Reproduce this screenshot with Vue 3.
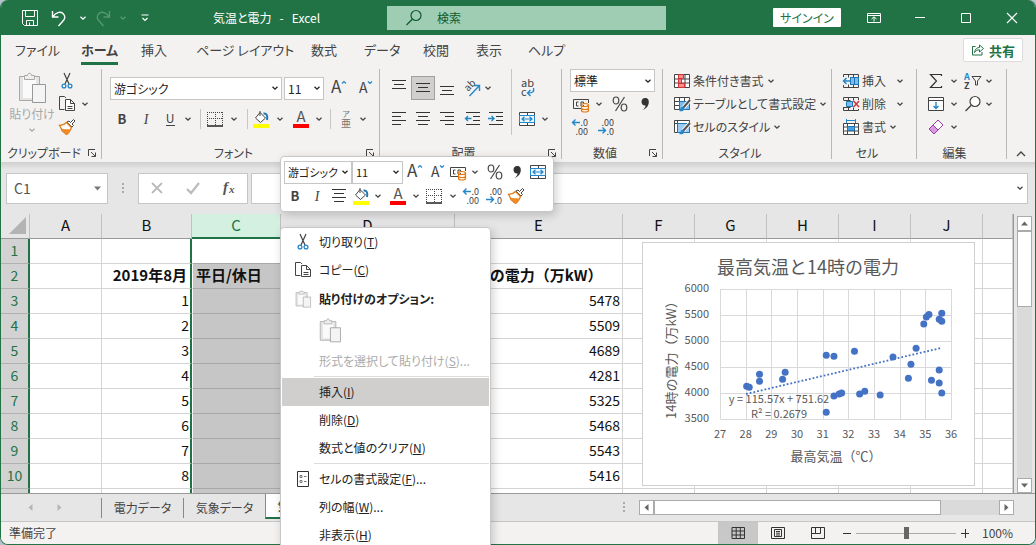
<script setup>
const clipItems = ['cut', 'copy', 'brush']
const fontRow = ['bold', 'italic', 'underline', 'chev', 'sep', 'border', 'chev', 'sep', 'fill', 'chev', 'color', 'chev', 'sep', 'ruby', 'chev']
const alignRow1 = ['top', 'middle', 'bottom', 'orient', 'chev']
const alignRow2 = ['left', 'center', 'right', 'outdent', 'indent']
const numberRow1 = ['currency', 'chev', 'percent', 'comma']
const numberRow2 = ['incdec', 'decdec']
const miniRow1 = ['grow', 'shrink', 'currency', 'chev', 'percent', 'comma', 'merge']
const miniRow2 = ['bold', 'italic', 'center', 'fill', 'chev', 'color', 'chev', 'border', 'chev', 'incdec', 'decdec', 'brush']
const editItems = ['sum', 'chev', 'sort', 'chev', 'down', 'chev', 'find', 'chev', 'eraser', 'chev']
const styleItems = [
  { icon: 'cond', text: '条件付き書式' },
  { icon: 'tablefmt', text: 'テーブルとして書式設定' },
  { icon: 'cellstyle', text: 'セルのスタイル' },
]
const cellItems = [
  { icon: 'cellins', text: '挿入', wide: true },
  { icon: 'celldel', text: '削除', wide: true },
  { icon: 'cellfmt', text: '書式' },
]
const labels = {
  cut: '切り取り', copy: 'コピー', brush: '書式のコピー', bold: '太字', italic: '斜体', underline: '下線', chev: 'その他',
  border: '罫線', fill: '塗りつぶし', color: 'フォントの色', ruby: 'ふりがな', top: '上揃え', middle: '上下中央揃え',
  bottom: '下揃え', orient: '方向', left: '左揃え', center: '中央揃え', right: '右揃え', outdent: 'インデントを減らす',
  indent: 'インデントを増やす', currency: '通貨', percent: 'パーセント', comma: '桁区切り', incdec: '小数点以下を増やす',
  decdec: '小数点以下を減らす', grow: '拡大', shrink: '縮小', merge: 'セルを結合', sum: '合計', sort: '並べ替え',
  down: 'フィル', find: '検索', eraser: 'クリア',
}
const tabs = ['ファイル', 'ホーム', '挿入', 'ページ レイアウト', '数式', 'データ', '校閲', '表示', 'ヘルプ']
const cols = ['A', 'B', 'C', 'D', 'E', 'F', 'G', 'H', 'I', 'J', '']
const power = [5478, 5509, 4689, 4281, 5325, 5468, 5543, 5416]
const rows = [
  { n: 1, b: '', c: '', e: '' },
  { n: 2, b: '2019年8月', c: '平日/休日', e: '14時の電力（万kW）', head: true },
  ...power.map((p, i) => ({ n: i + 3, b: i + 1, c: '', e: p })),
  { n: '', b: '', c: '', e: '' },
]
const menu = [
  { icon: 'cut', text: '切り取り', key: 'T' },
  { icon: 'copy', text: 'コピー', key: 'C' },
  { icon: 'paste', text: '貼り付けのオプション:', kind: 'heading' },
  { kind: 'paste' },
  { text: '形式を選択して貼り付け', key: 'S', tail: '...', kind: 'off' },
  { kind: 'line' },
  { text: '挿入', key: 'I', kind: 'hover' },
  { text: '削除', key: 'D' },
  { text: '数式と値のクリア', key: 'N' },
  { kind: 'line' },
  { icon: 'props', text: 'セルの書式設定', key: 'F', tail: '...' },
  { text: '列の幅', key: 'W', tail: '...' },
  { text: '非表示', key: 'H' },
]
const px = (t) => 79 + (t - 27) * 25.67
const xTicks = [27, 28, 29, 30, 31, 32, 33, 34, 35, 36]
const yTicks = [6000, 5500, 5000, 4500, 4000, 3500]
const py = (v) => 47 + (6000 - v) * 0.052
const points = [
  [28, 4130], [28.1, 4110], [28.5, 4360], [28.5, 4225], [29.5, 4400], [29.4, 4265], [31.1, 4725], [31.4, 4705],
  [32.2, 4805], [33.7, 4690], [34.3, 4285], [34.4, 4555], [34.6, 4860], [34.9, 5325], [35, 5460], [35.1, 5510],
  [35.6, 5535], [35.5, 5420], [35.6, 5380], [35.5, 4440], [35.2, 4245], [35.5, 4190], [35.6, 4000], [31.4, 3940],
  [31.6, 3980], [31.7, 4000], [32.4, 3980], [32.6, 4035], [33.2, 3960], [31.1, 3630],
]
</script>

<template>
  <div class="desktop">
    <svg class="sprite" aria-hidden="true">
      <symbol id="chev" viewBox="0 0 8 8"><path d="M1.5 2.7 4 5.2 6.500 2.700" fill="none" stroke="currentColor" stroke-width="1.3" /></symbol>
      <symbol id="save" viewBox="0 0 18 18"><path d="M1.500 1.500h15v15H3.500l-2-2zM4.500 1.500v6h9v-6M5.500 16.500v-5h7v5M8.500 16.500v-3" fill="none" stroke="#fff" /></symbol>
      <symbol id="undo" viewBox="0 0 18 18"><path d="M2.500 2v6h6M2.800 7.600C6 3.500 10 2 13 4.500c3 2.800 2 5.500-.5 8L8.500 17" fill="none" stroke="currentColor" stroke-width="1.400" /></symbol>
      <symbol id="redo" viewBox="0 0 18 18"><path d="M15.500 2v6h-6M15.200 7.600C12 3.500 8 2 5 4.500c-3 2.800-2 5.500.5 8l4 4.500" fill="none" stroke="currentColor" stroke-width="1.400" /></symbol>
      <symbol id="custom" viewBox="0 0 10 10"><path d="M1.500 2h7M2.500 5 5 7.500 7.500 5" fill="none" stroke="#fff" stroke-width="1.200" /></symbol>
      <symbol id="search" viewBox="0 0 18 18"><circle cx="11" cy="6.500" r="5" fill="none" stroke="currentColor" stroke-width="1.200" /><path d="M7.300 10.200 1.500 16" stroke="currentColor" stroke-width="1.300" /></symbol>
      <symbol id="ribbonopt" viewBox="0 0 18 18"><path d="M2.500 4.500h13v9h-13zM2.500 6.500h13M9 12.500v-4.500M6.500 10 9 7.800 11.500 10" fill="none" stroke="#fff" /></symbol>
      <symbol id="min" viewBox="0 0 18 18"><path d="M4 8.500h10" stroke="#fff" /></symbol>
      <symbol id="max" viewBox="0 0 18 18"><path d="M4.500 4.500h9v9h-9z" fill="none" stroke="#fff" /></symbol>
      <symbol id="close" viewBox="0 0 18 18"><path d="M4 4l10 10M14 4 4 14" stroke="#fff" stroke-width="1.100" /></symbol>
      <symbol id="share" viewBox="0 0 14 14"><path d="M4.500 3.500h-3v8.500h9.500V9M3.500 9.500C4 6 6 4.500 8.500 4.500V2l4 3.500-4 3.500V6.800C6.500 6.800 5 7.500 3.500 9.500z" fill="none" stroke="#217346" /></symbol>
      <symbol id="cut" viewBox="0 0 18 18"><path d="M6 1 11 12M12 1 7 12" stroke="#444" stroke-width="1.200" /><g fill="none" stroke="#2387c8" stroke-width="1.300"><circle cx="6" cy="14" r="1.900" /><circle cx="12" cy="14" r="1.900" /></g></symbol>
      <symbol id="copy" viewBox="0 0 18 18"><path d="M6.500 14.500h-5v-13h5l1.500 1.500" fill="none" stroke="#444" /><path d="M7.500 4.500h5l4 4v7h-9zM12.500 4.500v4h4M9.500 11.500h5M9.500 13.500h5" fill="#fff" stroke="#444" /></symbol>
      <symbol id="brush" viewBox="0 0 18 18"><path d="m9 4 5 5 1.500-1.500-1.500-1.500 3-3-1.500-1.500-3 3L11 3z" fill="#fff" stroke="#444" /><path d="M8.500 4.500C6.500 6.500 4 7.500 1.500 7.500l1.500 2.500 1 2.500L8.500 16.500C11 15 12.500 12 13.500 9.500z" fill="#fff" stroke="#e07b18" stroke-width="1.300" /><path d="M3 10.500c3 .8 6 .8 9.500 1C11.500 13.500 10.500 15.500 8.500 16.500z" fill="#f08a24" /></symbol>
      <symbol id="paste" viewBox="0 0 28 32"><path d="M1.500 4.500h20v24h-20z" fill="#e4e4e4" stroke="#a8a8a8" /><path d="M5 5h13v21H5z" fill="#fafafa" /><path d="M6.500 7.500v-4h3c0-3 4-3 4 0h3v4z" fill="#eee" stroke="#a8a8a8" /><path d="M14.500 12.500h13v18h-13z" fill="#f4f4f4" stroke="#979797" /></symbol>
      <symbol id="bold" viewBox="0 0 18 18"><text x="9" y="14" text-anchor="middle" font-size="13" font-weight="700" fill="#444">B</text></symbol>
      <symbol id="italic" viewBox="0 0 18 18"><text x="9" y="14" text-anchor="middle" font-size="14" font-family="Liberation Serif" font-style="italic" fill="#444">I</text></symbol>
      <symbol id="underline" viewBox="0 0 18 18"><text x="9" y="13" text-anchor="middle" font-size="12" fill="#444">U</text><path d="M5 15.500h9" stroke="#444" /></symbol>
      <symbol id="border" viewBox="0 0 18 18"><path d="M1.500 2v13M16.500 2v13M9.500 2v13M1 2.500h16M1 8.500h16" stroke="#444" stroke-dasharray="1 1" /><path d="M1 16h16" stroke="#222" stroke-width="1.500" /></symbol>
      <symbol id="fill" viewBox="0 0 18 18"><path d="m8 2.500 5.500 5.500L8.500 12.500 3.500 8zM8 6V1" fill="#fff" stroke="#444" /><path d="M11.500 3.500c3-.5 4.500 2 3.500 6.500" fill="none" stroke="#1d76b5" stroke-width="2" /><path d="M1 14h16v4H1z" fill="#ff0" /></symbol>
      <symbol id="color" viewBox="0 0 18 18"><text x="9" y="12" text-anchor="middle" font-size="15" fill="#555">A</text><path d="M1 14h16v4H1z" fill="#f00" /></symbol>
      <symbol id="ruby" viewBox="0 0 18 18"><g text-anchor="middle" fill="#777"><text x="9" y="7" font-size="8">ア</text><text x="9" y="17" font-size="10">亜</text></g></symbol>
      <symbol id="grow" viewBox="0 0 18 18"><text x="2" y="14" font-size="17" fill="#444">A</text><path d="M13 4.500 15 2.500 17 4.500" fill="none" stroke="#2387c8" stroke-width="1.200" /></symbol>
      <symbol id="shrink" viewBox="0 0 18 18"><text x="4" y="14" font-size="14" fill="#444">A</text><path d="M13 2.500 15 4.500 17 2.500" fill="none" stroke="#2387c8" stroke-width="1.200" /></symbol>
      <symbol id="top" viewBox="0 0 18 18"><path d="M2 1.500h14M4 5.500h10M2 9.500h14" stroke="#333" /></symbol>
      <symbol id="middle" viewBox="0 0 18 18"><path d="M2 4.500h14M4 8.500h10M2 12.500h14" stroke="#333" /></symbol>
      <symbol id="bottom" viewBox="0 0 18 18"><path d="M2 7.500h14M4 11.500h10M2 15.500h14" stroke="#333" /></symbol>
      <symbol id="left" viewBox="0 0 18 18"><path d="M2 2.500h14M2 6.500h9M2 10.500h14M2 14.500h9" stroke="#333" /></symbol>
      <symbol id="center" viewBox="0 0 18 18"><path d="M2 2.500h14M4 6.500h10M2 10.500h14M4 14.500h10" stroke="#333" /></symbol>
      <symbol id="right" viewBox="0 0 18 18"><path d="M2 2.500h14M7 6.500h9M2 10.500h14M7 14.500h9" stroke="#333" /></symbol>
      <symbol id="outdent" viewBox="0 0 18 18"><path d="M3 2.500h14M10 6.500h7M10 10.500h7M3 14.500h14" stroke="#333" /><path d="M8.500 8.500h-6M5 6 2.500 8.500 5 11" fill="none" stroke="#2387c8" stroke-width="1.400" /></symbol>
      <symbol id="indent" viewBox="0 0 18 18"><path d="M2 2.500h14M9 6.500h7M9 10.500h7M2 14.500h14" stroke="#333" /><path d="M1 8.500h6M4.500 6 7 8.500 4.500 11" fill="none" stroke="#2387c8" stroke-width="1.400" /></symbol>
      <symbol id="orient" viewBox="0 0 18 18"><text x="0" y="0" font-size="10" fill="#444" transform="translate(5 13) rotate(-45)">ab</text><path d="M6.500 17 16 7M11 6.500h5.500v5.500" fill="none" stroke="#2387c8" stroke-width="1.400" /></symbol>
      <symbol id="wrap" viewBox="0 0 18 18"><g font-size="11" fill="#444"><text x="3" y="8">ab</text><text x="3" y="17">c</text></g><path d="M15.500 9c1 4-1 5-5.500 5M12.500 11 9.500 14l3 3" fill="none" stroke="#2387c8" stroke-width="1.400" /></symbol>
      <symbol id="merge" viewBox="0 0 18 18"><path d="M1.500 2.500h15v13h-15zM9.500 2.500v3M9.500 12.500v3M1.500 5.500h15M1.500 12.500h15" fill="#fff" stroke="#444" /><path d="M1.500 5.500h15v7h-15z" fill="#eef7fd" stroke="#2387c8" /><path d="M4 9h10M6.500 6.800 4 9l2.500 2.200M11.500 6.800 14 9l-2.500 2.200" fill="none" stroke="#2387c8" stroke-width="1.200" /></symbol>
      <symbol id="currency" viewBox="0 0 18 18"><path d="M9 13.500H1.500v-9h15V8M6.500 7h-2v4h2M11.500 11V7h-2.500v4" fill="none" stroke="#444" /><path d="M9.500 10c0-2 7-2 7 0v5.500c0 2-7 2-7 0zM9.500 10c0 2 7 2 7 0M9.500 13c0 2 7 2 7 0" fill="#fff1e0" stroke="#e07b18" stroke-width="1.200" /></symbol>
      <symbol id="percent" viewBox="0 0 18 18"><g fill="none" stroke="#444" stroke-width="1.200"><ellipse cx="5" cy="5.500" rx="2.800" ry="3.500" /><ellipse cx="13" cy="12.500" rx="2.800" ry="3.500" /><path d="M13.500 2 4.500 16" /></g></symbol>
      <symbol id="comma" viewBox="0 0 18 18"><path d="M9 3c3 0 4 2 3.800 4.500C12.500 11 10 14 6.500 15c2-1.500 3-3 3-4.500C7 10.700 5.500 9 5.500 6.800 5.500 4.500 7 3 9 3z" fill="#333" /></symbol>
      <symbol id="incdec" viewBox="0 0 18 18"><g font-size="9" fill="#444" text-anchor="end"><text x="17" y="8">.0</text><text x="17" y="17">.00</text></g><path d="M9 4.500H1.500M4.500 1.500l-3 3 3 3" fill="none" stroke="#2387c8" stroke-width="1.400" /></symbol>
      <symbol id="decdec" viewBox="0 0 18 18"><g font-size="9" fill="#444" text-anchor="end"><text x="17" y="8">.00</text><text x="17" y="17">.0</text></g><path d="M1 12.500h7.500M5.500 9.500l3 3-3 3" fill="none" stroke="#2387c8" stroke-width="1.400" /></symbol>
      <symbol id="cond" viewBox="0 0 18 18"><path d="M1.500 2.500h15v13h-15zM1.500 7h15M1.500 11h15M6 2.500v13M12 2.500v13" fill="#fff" stroke="#444" /><path d="M5.500 2.500h5v4h-5zM5.500 7h3v4h-3zM5.500 11.500h6v4h-6z" fill="#ff8b8b" stroke="#d13438" /></symbol>
      <symbol id="tablefmt" viewBox="0 0 18 18"><path d="M1.500 2.500h15v12h-15zM1.500 6.500h15M1.500 10.500h15M6.500 2.500v12M11.500 2.500v12" fill="#fff" stroke="#444" /><path d="M6.500 6.500h10v8h-10z" fill="#7cbcf0" stroke="#1d76b5" /><path d="m17 5-7 8" stroke="#fff" stroke-width="4" /><path d="m17 5-7 8" stroke="#555" stroke-width="2" /><path d="M9.500 11.500c2 .5 2.500 2.500 1 4-1.500 1-3 1-4.500.5 2-1 1-3.500 3.500-4.500z" fill="#2387c8" /></symbol>
      <symbol id="cellstyle" viewBox="0 0 18 18"><path d="M1.500 2.500h15v12h-15zM1.500 5.500h15M4.500 2.500v12" fill="#fff" stroke="#444" /><path d="M4.500 5.500h12v9h-12z" fill="#9ccbf5" stroke="#1d76b5" /><path d="m17 5-7 8" stroke="#fff" stroke-width="4" /><path d="m17 5-7 8" stroke="#555" stroke-width="2" /><path d="M9.500 11.500c2 .5 2.500 2.500 1 4-1.500 1-3 1-4.500.5 2-1 1-3.500 3.500-4.500z" fill="#2387c8" /></symbol>
      <symbol id="cellins" viewBox="0 0 18 18"><path d="M1.500 5V2.500h15v13h-15V13M6.500 2.500v3M11.500 2.500v3M6.500 12.500v3M11.500 12.500v3M8 5.500h8.500M8 12.500h8.500" fill="none" stroke="#444" /><path d="M8.500 5.500h8v7h-8zM12.500 5.500v7" fill="#7cbcf0" stroke="#1d76b5" /><path d="M8 9H1.500M4.500 6l-3 3 3 3" fill="none" stroke="#2387c8" stroke-width="1.500" /></symbol>
      <symbol id="celldel" viewBox="0 0 18 18"><path d="M1.500 5V2.500h15V5M1.500 12v3.500h15V14M6.500 2.500v3M11.500 2.500v3M6.500 12.500v3M11.500 12.500v3M1.500 5.500h7M1.500 12.500h7" fill="none" stroke="#444" /><path d="M4.500 6.500h6v5h-6z" fill="#7cbcf0" stroke="#1d76b5" /><path d="m11.500 6 5.500 6M17 6l-5.500 6" stroke="#d13438" stroke-width="1.500" /></symbol>
      <symbol id="cellfmt" viewBox="0 0 18 18"><path d="M1.500 5.500h15v11h-15zM1.500 9h15M1.500 13h15M5.500 5.500v11M12.500 5.500v11" fill="#fff" stroke="#444" /><path d="M5.500 8.500h7v4h-7z" fill="#4b9fe0" stroke="#1d76b5" /><path d="M4.500 1v4M13.500 1v4M4.500 2.500h9" stroke="#2387c8" fill="none" /></symbol>
      <symbol id="sum" viewBox="0 0 18 18"><path d="M14.500 4V2.500h-11L9.500 9l-6 6.500h11V14" fill="none" stroke="#333" stroke-width="1.200" /></symbol>
      <symbol id="sort" viewBox="0 0 18 18"><text x="0" y="8" font-size="9" font-weight="700" fill="#2387c8">A</text><text x="0" y="17" font-size="9" font-weight="700" fill="#444">Z</text><path d="M8 4.500h9l-3.500 4.500v4h-2V9z" fill="none" stroke="#444" /></symbol>
      <symbol id="down" viewBox="0 0 18 18"><path d="M1.500 2.500h15v13h-15zM1.500 5.500h15" fill="#fff" stroke="#444" /><path d="M9 7v6.500M6.500 11 9 13.500 11.500 11" fill="none" stroke="#2387c8" stroke-width="1.400" /></symbol>
      <symbol id="find" viewBox="0 0 18 18"><circle cx="11" cy="6.500" r="5" fill="#fff" stroke="#444" stroke-width="1.200" /><path d="M7.300 10.200 1.500 16" stroke="#444" stroke-width="1.400" /></symbol>
      <symbol id="eraser" viewBox="0 0 18 18"><path d="m2 11 9-9 5 5-9 9z" fill="#fff" stroke="#9b3fa5" /><path d="m2 11 4-4 5 5-4 4z" fill="#d89be0" stroke="#9b3fa5" /></symbol>
      <symbol id="launch" viewBox="0 0 10 10"><path d="M1.500 8V1.500H8M4 4l4.500 4.500M8.500 4.500v4h-4" fill="none" stroke="#444" /></symbol>
      <symbol id="props" viewBox="0 0 18 18"><path d="M3.500 1.500h11v15h-11z" fill="#fff" stroke="#333" /><path d="M6 5.500h2v2H6zM6 10.500h2v2H6zM10 6.500h2.500M10 11.500h2.500" fill="none" stroke="#777" /></symbol>
      <symbol id="tri-up" viewBox="0 0 15 15"><path d="m4 9.500 3.500-4 3.500 4z" fill="#666" /></symbol>
      <symbol id="tri-down" viewBox="0 0 15 15"><path d="m4 5.500 3.500 4 3.500-4z" fill="currentColor" /></symbol>
      <symbol id="tri-left" viewBox="0 0 15 15"><path d="m9.500 4-4 3.500 4 3.500z" fill="currentColor" /></symbol>
      <symbol id="tri-right" viewBox="0 0 15 15"><path d="m5.500 4 4 3.500-4 3.500z" fill="currentColor" /></symbol>
      <symbol id="cancel" viewBox="0 0 18 18"><path d="m4 4 10 10M14 4 4 14" stroke="#bbb" stroke-width="1.800" /></symbol>
      <symbol id="enter" viewBox="0 0 18 18"><path d="m3 10 4 4 8-10" fill="none" stroke="#bbb" stroke-width="2.200" /></symbol>
      <symbol id="fx" viewBox="0 0 18 18"><g font-family="Liberation Serif" font-style="italic" font-weight="700" fill="#555"><text x="3" y="13" font-size="15">f</text><text x="9" y="14" font-size="11">x</text></g></symbol>
      <symbol id="v-normal" viewBox="0 0 18 18"><path d="M3 3.500h12.500v11H3zM3 7h12.500M3 11h12.500M7.200 3.500v11M11.300 3.500v11" fill="none" stroke="#333" /></symbol>
      <symbol id="v-page" viewBox="0 0 18 18"><path d="M2.500 3.500h13v11h-13zM5.500 5.500h7v7h-7zM7 7.500h4M7 9.200h4M7 11h4" fill="none" stroke="#333" /></symbol>
      <symbol id="v-break" viewBox="0 0 18 18"><path d="M2.500 3.500h13v11h-13zM6.500 3.500v6M11.500 3.500v6M2.500 9.500h9" fill="none" stroke="#333" /></symbol>
    </svg>

    <div class="window">
      <header class="titlebar">
        <div class="quick">
          <button aria-label="上書き保存"><svg class="ico"><use href="#save" /></svg></button>
          <button aria-label="元に戻す"><svg class="ico"><use href="#undo" /></svg></button>
          <button aria-label="元に戻す一覧"><svg class="chev"><use href="#chev" /></svg></button>
          <button class="dim" aria-label="やり直し"><svg class="ico"><use href="#redo" /></svg></button>
          <button class="dim" aria-label="やり直し一覧"><svg class="chev"><use href="#chev" /></svg></button>
          <button aria-label="カスタマイズ"><svg class="small"><use href="#custom" /></svg></button>
        </div>
        <div class="title"><span>気温と電力</span><span>-</span><span>Excel</span></div>
        <label class="search"><svg class="ico"><use href="#search" /></svg><input type="text" placeholder="検索" aria-label="検索" /></label>
        <button class="signin">サインイン</button>
        <div class="winbtns">
          <button v-for="b in ['ribbonopt', 'min', 'max', 'close']" :key="b" :aria-label="b"><svg class="ico"><use :href="'#' + b" /></svg></button>
        </div>
      </header>

      <nav class="tabbar">
        <div class="tabs">
          <button v-for="t in tabs" :key="t" :class="{ active: t === 'ホーム' }"><span>{{ t }}</span></button>
        </div>
        <button class="share"><svg class="ico14"><use href="#share" /></svg>共有</button>
      </nav>

      <section class="ribbon">
        <div class="group g-clip">
          <div class="body">
            <button class="paste"><svg class="pasteico"><use href="#paste" /></svg><span>貼り付け</span><svg class="chev"><use href="#chev" /></svg></button>
            <div class="stack3">
              <div v-for="c in clipItems" :key="c" class="pair">
                <button :aria-label="labels[c]"><svg class="ico"><use :href="'#' + c" /></svg></button>
                <button v-if="c === 'copy'" aria-label="コピーの種類"><svg class="chev"><use href="#chev" /></svg></button>
              </div>
            </div>
          </div>
          <div class="caption"><span>クリップボード</span><button aria-label="クリップボードの詳細"><svg class="small"><use href="#launch" /></svg></button></div>
        </div>

        <div class="group g-font">
          <div class="body rows2">
            <div class="row font1">
              <label class="sel"><select aria-label="フォント"><option>游ゴシック</option></select><svg class="chev"><use href="#chev" /></svg></label>
              <label class="sel"><select aria-label="フォント サイズ"><option>11</option></select><svg class="chev"><use href="#chev" /></svg></label>
              <button aria-label="拡大"><svg class="ico"><use href="#grow" /></svg></button>
              <button aria-label="縮小"><svg class="ico"><use href="#shrink" /></svg></button>
            </div>
            <div class="row font2">
              <template v-for="(c, i) in fontRow" :key="i">
                <i v-if="c === 'sep'" class="sep"></i>
                <button v-else :aria-label="labels[c]"><svg :class="c === 'chev' ? 'chev' : 'ico'"><use :href="'#' + c" /></svg></button>
              </template>
            </div>
          </div>
          <div class="caption"><span>フォント</span><button aria-label="フォントの詳細"><svg class="small"><use href="#launch" /></svg></button></div>
        </div>

        <div class="group g-align">
          <div class="body alignbody">
            <div class="rows2">
              <div class="row align1">
                <button v-for="c in alignRow1" :key="c" :class="{ pressed: c === 'middle' }" :aria-label="labels[c]"><svg :class="c === 'chev' ? 'chev' : 'ico'"><use :href="'#' + c" /></svg></button>
              </div>
              <div class="row align2">
                <button v-for="c in alignRow2" :key="c" :aria-label="labels[c]"><svg class="ico"><use :href="'#' + c" /></svg></button>
              </div>
            </div>
            <div class="rows2 alignright">
              <div class="row wrapmerge"><button aria-label="折り返して全体を表示する"><svg class="ico"><use href="#wrap" /></svg></button></div>
              <div class="row wrapmerge">
                <button aria-label="セルを結合して中央揃え"><svg class="ico"><use href="#merge" /></svg></button>
                <button aria-label="結合の種類"><svg class="chev"><use href="#chev" /></svg></button>
              </div>
            </div>
          </div>
          <div class="caption"><span>配置</span><button aria-label="配置の詳細"><svg class="small"><use href="#launch" /></svg></button></div>
        </div>

        <div class="group g-num">
          <div class="body stack3">
            <label class="sel"><select aria-label="表示形式"><option>標準</option></select><svg class="chev"><use href="#chev" /></svg></label>
            <div class="row num1">
              <button v-for="c in numberRow1" :key="c" :aria-label="labels[c]"><svg :class="c === 'chev' ? 'chev' : 'ico'"><use :href="'#' + c" /></svg></button>
            </div>
            <div class="row num2">
              <button v-for="c in numberRow2" :key="c" :aria-label="labels[c]"><svg class="ico"><use :href="'#' + c" /></svg></button>
            </div>
          </div>
          <div class="caption"><span>数値</span><button aria-label="表示形式の詳細"><svg class="small"><use href="#launch" /></svg></button></div>
        </div>

        <div class="group g-style">
          <div class="body stack3">
            <button v-for="s in styleItems" :key="s.icon" class="textbtn"><svg class="ico"><use :href="'#' + s.icon" /></svg><span>{{ s.text }}</span><svg class="chev"><use href="#chev" /></svg></button>
          </div>
          <div class="caption"><span>スタイル</span></div>
        </div>

        <div class="group g-cell">
          <div class="body stack3">
            <button v-for="s in cellItems" :key="s.icon" class="textbtn" :class="{ wide: s.wide }"><svg class="ico"><use :href="'#' + s.icon" /></svg><span>{{ s.text }}</span><svg class="chev"><use href="#chev" /></svg></button>
          </div>
          <div class="caption"><span>セル</span></div>
        </div>

        <div class="group g-edit">
          <div class="body editgrid">
            <button v-for="(c, i) in editItems" :key="i" :aria-label="labels[c]"><svg :class="c === 'chev' ? 'chev' : 'ico'"><use :href="'#' + c" /></svg></button>
          </div>
          <div class="caption"><span>編集</span></div>
        </div>
        <button class="collapse" aria-label="リボンを折りたたむ"><svg viewBox="0 0 10 10"><path d="M1 7 5 3l4 4" fill="none" stroke="#444" stroke-width="1.300" /></svg></button>
      </section>

      <section class="formula">
        <label class="namebox"><input type="text" value="C1" aria-label="名前ボックス" /><svg class="tri"><use href="#tri-down" /></svg></label>
        <i class="dots"></i>
        <div class="fbtns">
          <button v-for="b in ['cancel', 'enter', 'fx']" :key="b" :aria-label="b"><svg class="ico"><use :href="'#' + b" /></svg></button>
        </div>
        <label class="fbox"><input type="text" aria-label="数式バー" /><svg class="chev"><use href="#chev" /></svg></label>
      </section>

      <main class="work">
        <div class="sheet">
          <table>
            <colgroup><col class="w-head" /><col class="w72" /><col class="w-b" /><col class="w-c" /><col class="w-d" /><col class="w-e" /><col v-for="n in 5" :key="n" class="w72" /><col /></colgroup>
            <thead>
              <tr>
                <th class="corner"><svg viewBox="0 0 17 17"><path d="M17 0v17H0z" fill="#b3b3b3" /></svg></th>
                <th v-for="c in cols" :key="c" :class="{ on: c === 'C' }">{{ c }}</th>
              </tr>
            </thead>
            <tbody>
              <tr v-for="(r, i) in rows" :key="i" :class="{ head: r.head }">
                <th>{{ r.n }}</th>
                <td></td>
                <td class="num bcol">{{ r.b }}</td>
                <td class="ccol" :class="{ first: i === 0 }">{{ r.c }}</td>
                <td></td>
                <td :class="r.head ? 'ecol' : 'num'">{{ r.e }}</td>
                <td v-for="n in 6" :key="n"></td>
              </tr>
            </tbody>
          </table>
          <svg class="chart" viewBox="0 0 333 244" role="img" aria-label="最高気温と14時の電力">
            <rect x="0.5" y="0.5" width="332" height="243" fill="#fff" stroke="#d0d0d0" />
            <text x="166" y="32" class="ctitle">最高気温と14時の電力</text>
            <path v-for="x in xTicks" :key="'x' + x" :d="`M${Math.round(px(x)) - 0.5} 47V177`" stroke="#d9d9d9" />
            <path v-for="y in yTicks" :key="'y' + y" :d="`M78.500 ${Math.round(py(y)) + 0.5}H310`" stroke="#d9d9d9" />
            <text v-for="y in yTicks" :key="'yl' + y" x="67" :y="py(y) + 3" class="tick end">{{ y }}</text>
            <text v-for="x in xTicks" :key="'xl' + x" :x="px(x) - 1" y="196" class="tick mid">{{ x }}</text>
            <path d="M104 152 299 106" stroke="#4472c4" stroke-width="1.800" stroke-dasharray="1.800 2" />
            <circle v-for="(p, i) in points" :key="i" :cx="px(p[0])" :cy="py(p[1])" r="3.500" fill="#4472c4" />
            <text x="137" y="161" class="tick mid">y = 115.57x + 751.62</text>
            <text x="137" y="176" class="tick mid">R² = 0.2679</text>
            <text x="194" y="219" class="axis">最高気温（℃）</text>
            <text class="axis" transform="translate(34 115) rotate(-90)">14時の電力（万kW）</text>
          </svg>
        </div>
        <div class="vscroll">
          <button aria-label="上へ"><svg><use href="#tri-up" /></svg></button>
          <i class="thumb"></i><i class="track"></i>
          <button aria-label="下へ"><svg><use href="#tri-down" /></svg></button>
        </div>
      </main>

      <section class="sheetbar">
        <div class="sheetnav"><svg><use href="#tri-left" /></svg><svg><use href="#tri-right" /></svg></div>
        <button class="stab">電力データ</button>
        <button class="stab">気象データ</button>
        <button class="stab current">気温と電力</button>
        <i class="dots"></i>
        <div class="hscroll">
          <button aria-label="左へ"><svg><use href="#tri-left" /></svg></button>
          <i class="thumb"></i><i class="track"></i>
          <button aria-label="右へ"><svg><use href="#tri-right" /></svg></button>
        </div>
      </section>

      <footer class="status">
        <span class="ready">準備完了</span>
        <button v-for="v in ['v-normal', 'v-page', 'v-break']" :key="v" class="view" :class="{ sel: v === 'v-normal' }" :aria-label="v"><svg class="ico"><use :href="'#' + v" /></svg></button>
        <button class="zoombtn" aria-label="縮小"><svg viewBox="0 0 10 10"><path d="M1 5.500h8" stroke="#333" /></svg></button>
        <input class="zoom" type="range" min="0" max="100" value="50" aria-label="ズーム" />
        <button class="zoombtn" aria-label="拡大"><svg viewBox="0 0 10 10"><path d="M1 5.500h8M5.500 1v9" stroke="#333" /></svg></button>
        <span class="pct">100%</span>
      </footer>
    </div>

    <div class="popup">
      <div class="mini">
        <div class="row mini1">
          <label class="sel"><select aria-label="フォント名"><option>游ゴシック</option></select><svg class="chev"><use href="#chev" /></svg></label>
          <label class="sel"><select aria-label="サイズ"><option>11</option></select><svg class="chev"><use href="#chev" /></svg></label>
          <button v-for="c in miniRow1" :key="c" :aria-label="labels[c]"><svg :class="c === 'chev' ? 'chev' : 'ico'"><use :href="'#' + c" /></svg></button>
        </div>
        <div class="row mini2">
          <button v-for="(c, i) in miniRow2" :key="i" :aria-label="labels[c]"><svg :class="c === 'chev' ? 'chev' : 'ico'"><use :href="'#' + c" /></svg></button>
        </div>
      </div>
      <div class="menu" role="menu">
        <template v-for="(m, i) in menu" :key="i">
          <hr v-if="m.kind === 'line'" />
          <button v-else-if="m.kind === 'paste'" class="pasteopt" role="menuitem" aria-label="貼り付け"><svg><use href="#paste" /></svg></button>
          <div v-else-if="m.kind === 'heading'" class="item heading"><span class="mi"><svg class="ico"><use href="#paste" /></svg></span><span>{{ m.text }}</span></div>
          <button v-else class="item" :class="m.kind" role="menuitem"><span class="mi"><svg v-if="m.icon" class="ico"><use :href="'#' + m.icon" /></svg></span><span>{{ m.text }}(<u>{{ m.key }}</u>){{ m.tail }}</span></button>
        </template>
      </div>
    </div>
  </div>
</template>

<style>
body { margin: 0; }
</style>

<style scoped>
.desktop {
  position: relative; height: 100vh; overflow: hidden; background: #b4c3cd;
  font-family: "Noto Sans CJK JP", "Noto Sans", sans-serif; font-size: 12px; color: #444;
  font-feature-settings: "palt";
}
.desktop * { box-sizing: border-box; }
.sprite { display: none; }
button, input, select { font: inherit; font-feature-settings: inherit; color: inherit; background: none; border: 0; padding: 0; margin: 0; outline: 0; border-radius: 0; }
button { display: flex; align-items: center; justify-content: center; white-space: nowrap; }
svg { display: block; flex: none; }
svg.sprite { display: none; }
.ico { width: 18px; height: 18px; }
.ico14 { width: 14px; height: 14px; }
.chev { width: 8px; height: 8px; }
.small { width: 10px; height: 10px; }
.window { height: 100%; display: flex; flex-direction: column; border: 1px solid #217346; border-top: 0; border-radius: 8px; overflow: hidden; background: #e6e6e6; }

.titlebar { flex: none; height: 35px; background: #217346; color: #fff; display: flex; align-items: center; }
.quick { flex: none; width: 212px; padding-left: 16px; display: grid; grid-template-columns: 26px 32px 16px 24px 16px 28px; align-items: center; }
.dim { color: #579772; }
.title { width: 174px; display: flex; gap: 8px; line-height: 16px; }
.search { display: flex; align-items: center; gap: 14px; width: 279px; height: 24px; padding-left: 18px; background: #9fcdb3; color: #0e5c2f; }
.search input { flex: 1; min-width: 0; }
.search input::placeholder { color: #0e5c2f; opacity: 1; }
.signin { width: 68px; height: 19px; margin-left: auto; background: #fff; color: #217346; border-radius: 1px; }
.winbtns { display: grid; grid-template-columns: repeat(4, 46px); margin-left: 10px; }

.tabbar { flex: none; height: 34px; display: flex; justify-content: space-between; background: #f3f2f1; padding: 3px 12px 0 14px; }
.tabs { display: grid; grid-template-columns: 66px 60px 55px 115px 53px 59px 53px 52px 50px; height: 26px; font-size: 13px; }
.tabs button { justify-content: flex-start; align-items: stretch; }
.tabs span { line-height: 24px; }
.tabs .active { font-weight: 700; }
.tabs .active span { border-bottom: 3px solid #217346; }
.share { width: 60px; height: 24px; gap: 4px; background: #fff; color: #217346; font-weight: 700; font-size: 13px; border: 1px solid #dcdcdc; border-radius: 2px; }

.ribbon { flex: none; display: flex; height: 93px; padding-bottom: 3px; background: #f3f2f1; }
.group { flex: none; display: flex; flex-direction: column; border-right: 1px solid #b8b8b8; }
.body { flex: 1; min-height: 0; }
.caption { flex: none; display: grid; grid-template-columns: 1fr 10px; align-items: center; padding: 0 4px 0 0; line-height: 12px; text-align: center; }
.g-clip { width: 101px; }
.g-font { width: 278px; }
.g-align { width: 182px; }
.g-num { width: 101px; }
.g-style { width: 169px; }
.g-cell { width: 85px; }
.g-edit { width: 90px; }
.row { display: grid; align-items: center; align-content: center; }
.rows2 { display: grid; grid-template-rows: 24px 24px; gap: 7px; align-content: start; padding-top: 7px; }
.stack3 { display: grid; grid-template-rows: 23px 23px 23px; align-content: start; }
.g-clip .body { display: flex; padding-left: 9px; }
.paste { flex-direction: column; justify-content: flex-start; width: 44px; padding-top: 3px; color: #a8a8a8; line-height: 18px; gap: 1px; }
.pasteico { width: 28px; height: 32px; }
.paste .chev { margin-top: 2px; }
.pair { display: grid; grid-template-columns: 26px 10px; }
.g-font .body { padding-left: 8px; }
.sel { display: grid; align-items: center; height: 23px; background: #fff; border: 1px solid #c6c6c6; color: #222; }
.sel select { grid-area: 1 / 1; width: 100%; height: 21px; padding-left: 3px; appearance: none; }
.sel .chev { grid-area: 1 / 1; justify-self: end; margin-right: 2px; pointer-events: none; }
.font1 { grid-template-columns: 172px 40px 24px 24px; column-gap: 2px; }
.font2 { grid-template-columns: 24px 24px 24px 12px 13px 16px 22px 4px 24px 14px 28px 8px 14px 18px 16px; }
.sep { justify-self: center; width: 1px; height: 20px; background: #c8c6c4; }
.alignbody { display: flex; padding-left: 7px; }
.align1 { grid-template-columns: 24px 24px 24px 25px 8px; }
.align2 { grid-template-columns: 24px 24px 24px 25px 24px; }
.pressed { height: 24px; background: #d0cfcd; outline: 1px solid #a0a0a0; outline-offset: -1px; }
.alignright { margin-left: 3px; padding-left: 3px; height: 66px; border-left: 1px solid #c8c6c4; }
.wrapmerge { grid-template-columns: 24px 12px; }
.g-num .body { padding-left: 6px; }
.g-num .sel { width: 85px; margin-left: 2px; }
.num1 { grid-template-columns: 26px 10px 32px 18px; }
.num2 { grid-template-columns: 24px 28px; }
.g-style .body { padding-left: 10px; }
.g-cell .body { padding-left: 10px; }
.textbtn { justify-content: flex-start; gap: 2px; line-height: 20px; }
.textbtn .chev { margin-left: 1px; }
.wide .chev { margin-left: 8px; }
.editgrid { display: grid; grid-template: repeat(3, 23px) / 22px 14px 24px 8px; padding-left: 8px; }
.collapse { margin-left: auto; align-self: flex-end; width: 28px; height: 10px; }
.collapse svg { width: 10px; height: 10px; }

.formula { flex: none; display: flex; align-items: center; height: 52px; padding: 0 7px 0 5px; background: linear-gradient(#cfcfcf, #e6e6e6 7px); }
.namebox, .fbox, .fbtns { display: flex; align-items: center; height: 31px; background: #fff; border: 1px solid #c6c6c6; }
.namebox { width: 102px; padding: 0 2px 0 7px; font-size: 14px; color: #555; }
.namebox input { flex: 1; min-width: 0; }
.tri { width: 15px; height: 15px; color: #777; }
.dots { flex: none; width: 2px; height: 11px; margin: 0 14px; background: repeating-linear-gradient(#aaa 0 2px, transparent 2px 4px); }
.fbtns { width: 110px; display: grid; grid-template-columns: 36px 36px 36px; }
.fbox { flex: 1; margin-left: 3px; padding-right: 3px; }
.fbox input { flex: 1; min-width: 0; }

.work { flex: 1; min-height: 0; display: flex; }
.sheet { position: relative; flex: 1; min-width: 0; overflow: hidden; background: #fff; border-right: 1px solid #999; }
table { width: 100%; table-layout: fixed; border-collapse: separate; border-spacing: 0; font-feature-settings: normal; color: #111; }
.w-head { width: 29px; }
.w72 { width: 72px; }
.w-b { width: 90px; }
.w-c { width: 89px; }
.w-d { width: 174px; }
.w-e { width: 168px; }
th, td { height: 25px; padding: 0 0 2px; line-height: 20px; white-space: nowrap; border-right: 1px solid #d4d4d4; border-bottom: 1px solid #d4d4d4; font-size: 14px; }
th { font-weight: 400; }
thead th { background: #e6e6e6; border-color: #c0c0c0; border-bottom-color: #999; font-size: 15px; }
thead .on { background: #d3f0e0; color: #217346; border-bottom: 2px solid #217346; padding-bottom: 1px; }
.corner svg { width: 17px; height: 17px; margin-left: 8px; }
tbody th { background: #d2d2d2; color: #217346; border-right: 2px solid #217346; border-bottom-color: #b0b0b0; }
td.num { text-align: right; padding-right: 2px; }
td.bcol { border-right: 2px solid #217346; padding-right: 1px; }
td.ccol { background: #c6c6c6; border-color: #a8a8a8; border-left: 1px solid #fff; padding-left: 3px; }
td.first { background: #fff; }
.head td { font-weight: 700; font-size: 15px; }
td.ecol { padding-left: 2px; }
.head td.bcol { padding-right: 3px; }
.chart { position: absolute; left: 641px; top: 28px; width: 333px; height: 244px; font-feature-settings: normal; }
.chart text { fill: #595959; }
.ctitle { font-size: 18px; text-anchor: middle; }
.tick { font-size: 11px; }
.end { text-anchor: end; }
.mid { text-anchor: middle; }
.axis { font-size: 13px; text-anchor: middle; }
.vscroll { flex: none; width: 15px; margin: 2px 3px 0; display: flex; flex-direction: column; }
.vscroll button, .hscroll button { flex: none; width: 15px; height: 15px; background: #fff; border: 1px solid #ababab; color: #666; }
.vscroll svg, .hscroll svg { width: 15px; height: 15px; }
.thumb { background: #fff; border: 1px solid #ababab; }
.track { background: #dadada; }
.vscroll .thumb { flex: 30 1 0; }
.vscroll .track { flex: 70 1 0; }

.sheetbar { flex: none; display: flex; align-items: center; height: 28px; padding-right: 21px; border-top: 1px solid #999; background: #e6e6e6; }
.sheetnav { flex: none; width: 100px; display: flex; gap: 14px; padding-left: 22px; color: #b5b5b5; }
.sheetnav svg { width: 15px; height: 15px; }
.stab { flex: none; width: 82px; height: 20px; border-left: 1px solid #888; }
.current { align-self: flex-start; height: 25px; background: #fff; color: #217346; font-weight: 700; border-bottom: 2px solid #217346; }
.sheetbar .dots { margin-left: auto; }
.hscroll { flex: none; display: flex; width: 37%; height: 15px; }
.hscroll .thumb { flex: 83 1 0; }
.hscroll .track { flex: 17 1 0; }

.status { flex: none; display: flex; align-items: center; height: 23px; border-top: 1px solid #c6c6c6; background: #f3f2f1; line-height: 18px; }
.ready { margin-right: auto; padding-left: 8px; }
.view { width: 40px; height: 22px; }
.view.sel { background: #c8c8c8; }
.zoombtn { width: 18px; height: 18px; }
.zoombtn svg { width: 10px; height: 10px; }
.zoom { width: 100px; height: 12px; appearance: none; background: linear-gradient(#aaa, #aaa) center / 100% 1px no-repeat; }
.zoom::-webkit-slider-thumb { appearance: none; width: 5px; height: 12px; background: #666; border: 0; border-radius: 0; }
.pct { width: 61px; padding-left: 8px; }

.popup { position: absolute; left: 280px; top: 156px; display: flex; flex-direction: column; align-items: flex-start; gap: 15px; }
.mini { width: 274px; height: 56px; padding: 3px; background: #fff; border: 1px solid #c8c8c8; border-radius: 4px; box-shadow: 2px 3px 10px #00000030; }
.mini .row { height: 24px; }
.mini1 .sel { font-size: 11px; }
.mini1 { grid-template-columns: 68px 51px 22px 22px 22px 12px 28px 16px 26px; }
.mini2 { grid-template-columns: 22px 22px 22px 22px 12px 28px 8px 28px 10px 26px 20px 24px; }
.menu { width: 211px; padding: 0 1px; background: #fff; border: 1px solid #c8c8c8; border-radius: 4px; box-shadow: 2px 3px 10px #00000030; color: #222; line-height: 16px; }
.item { display: flex; align-items: center; justify-content: flex-start; width: 100%; height: 28px; gap: 7px; white-space: nowrap; }
.mi { width: 30px; display: flex; justify-content: flex-end; }
.heading { height: 30px; font-weight: 700; }
.off { color: #ababab; }
.hover { background: #d0cfcd; }
.pasteopt { width: 22px; height: 33px; margin-left: 37px; }
.pasteopt svg { width: 22px; height: 25px; }
hr { height: 1px; margin: 1px 0 1px 32px; border: 0; background: #dcdcdc; }
</style>
